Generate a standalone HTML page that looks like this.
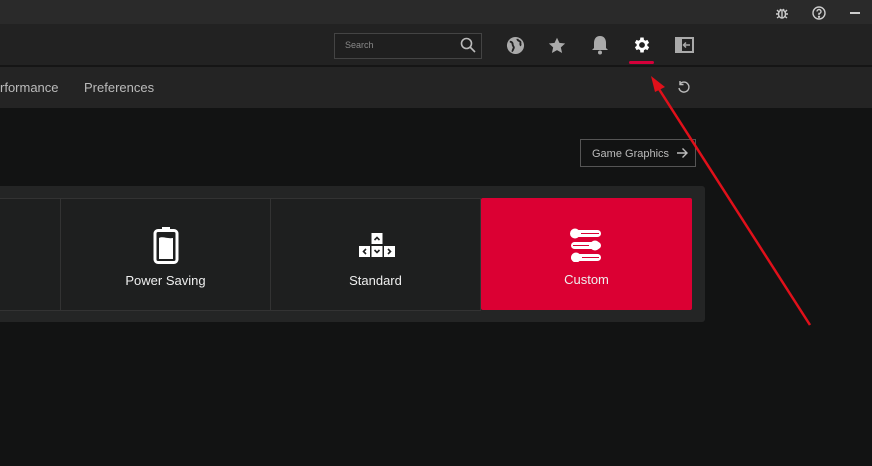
<!DOCTYPE html>
<html><head><style>
body{margin:0;width:872px;height:466px;background:#121313;font-family:"Liberation Sans",sans-serif;position:relative;overflow:hidden;color:#ddd}
.a{position:absolute}
.tile{position:absolute;top:198px;height:111px;background:#1e1f1f;border:1px solid #333}
.lbl{position:absolute;top:74px;width:100%;text-align:center;font-size:13px;color:#eee}
</style></head><body>
<div class="a" style="left:0;top:0;width:872px;height:24px;background:#2a2a2a"></div>
<div class="a" style="left:0;top:24px;width:872px;height:41px;background:#222"></div>
<div class="a" style="left:0;top:65px;width:872px;height:2px;background:#151515"></div>
<div class="a" style="left:0;top:67px;width:872px;height:41px;background:#242424"></div>
<svg class="a" style="left:775px;top:6px" width="14" height="14" viewBox="0 0 14 14" fill="none" stroke="#ccc" stroke-width="1.4"><ellipse cx="7" cy="8" rx="3.5" ry="4"/><path d="M1 8h2.5M10.5 8H13M2 4l2 2M12 4l-2 2M2 12l2-1.5M12 12l-2-1.5M5 3l1 1.5M9 3l-1 1.5M7 5v7"/></svg>
<svg class="a" style="left:812px;top:6px" width="14" height="14" viewBox="0 0 14 14" fill="none" stroke="#ccc" stroke-width="1.4"><circle cx="7" cy="7" r="6"/><path d="M5 5.5a2 2 0 1 1 2 2v1.5"/><circle cx="7" cy="10.8" r=".5" fill="#ccc"/></svg>
<div class="a" style="left:850px;top:12px;width:10px;height:2px;background:#ccc"></div>
<div class="a" style="left:334px;top:33px;width:146px;height:24px;border:1px solid #444;background:#1f1f1f"></div>
<div class="a" style="left:345px;top:40px;font-size:9px;color:#888">Search</div>
<svg class="a" style="left:460px;top:37px" width="16" height="16" viewBox="0 0 16 16" fill="none" stroke="#bbb" stroke-width="1.6"><circle cx="6.5" cy="6.5" r="5"/><path d="M10 10l5 5"/></svg>
<svg class="a" style="left:506px;top:36px" width="19" height="19" viewBox="0 0 20 20"><circle cx="10" cy="10" r="9" fill="#aaa"/><path d="M4 6c2 0 3 1 3 3s2 2 1 4-1 3-2 3M12 3c0 2 2 2 3 3s-1 3 1 4" stroke="#222" stroke-width="2" fill="none"/></svg>
<svg class="a" style="left:548px;top:37px" width="18" height="17" viewBox="0 0 24 23"><path d="M12 1l3.3 7 7.7.8-5.8 5.2 1.7 7.6L12 17.7 5.1 21.6l1.7-7.6L1 8.8 8.7 8z" fill="#aaa"/></svg>
<svg class="a" style="left:591px;top:35px" width="18" height="20" viewBox="0 0 18 20"><path d="M9 1c4 0 6 3 6 7v5l2 2H1l2-2V8c0-4 2-7 6-7z" fill="#aaa"/><circle cx="9" cy="17.5" r="2" fill="#aaa"/></svg>
<svg class="a" style="left:632px;top:35px" width="20" height="20" viewBox="0 0 24 24"><path fill="#fff" d="M19.4 13a7.5 7.5 0 0 0 0-2l2.1-1.6-2-3.5-2.5 1a7.5 7.5 0 0 0-1.7-1L15 3h-4l-.4 2.9a7.5 7.5 0 0 0-1.7 1l-2.5-1-2 3.5L6.6 11a7.5 7.5 0 0 0 0 2l-2.1 1.6 2 3.5 2.5-1a7.5 7.5 0 0 0 1.7 1L11 21h4l.4-2.9a7.5 7.5 0 0 0 1.7-1l2.5 1 2-3.5zM13 15.5a3.5 3.5 0 1 1 0-7 3.5 3.5 0 0 1 0 7z" transform="translate(-1 0)"/></svg>
<div class="a" style="left:629px;top:61px;width:25px;height:3px;background:#d4003a;border-radius:2px"></div>
<svg class="a" style="left:675px;top:37px" width="19" height="16" viewBox="0 0 19 16"><rect x="1" y="1" width="17" height="14" fill="none" stroke="#aaa" stroke-width="2"/><rect x="1" y="1" width="6" height="14" fill="#aaa"/><path d="M15 8H9M11 5.5L8.5 8 11 10.5" stroke="#aaa" stroke-width="1.5" fill="none"/></svg>
<div class="a" style="left:0;top:80px;font-size:13px;color:#bbb">rformance</div>
<div class="a" style="left:84px;top:80px;font-size:13px;color:#bbb">Preferences</div>
<svg class="a" style="left:677px;top:80px" width="14" height="14" viewBox="0 0 14 14" fill="none" stroke="#bbb" stroke-width="1.4"><path d="M3 4a5 5 0 1 1-1 4"/><path d="M3 1v3.5h3.5"/></svg>
<div class="a" style="left:580px;top:139px;width:116px;height:28px;border:1px solid #555;box-sizing:border-box"></div>
<div class="a" style="left:592px;top:148px;font-size:11px;color:#bbb">Game Graphics</div>
<svg class="a" style="left:676px;top:147px" width="12" height="12" viewBox="0 0 12 12" fill="none" stroke="#bbb" stroke-width="1.4"><path d="M1 6h10M6.5 1.5L11 6l-4.5 4.5"/></svg>
<div class="a" style="left:0;top:186px;width:705px;height:136px;background:#242525;border-radius:0 3px 3px 0"></div>
<div class="tile" style="left:-1px;width:60px"></div>
<div class="tile" style="left:60px;width:209px">
 <svg class="a" style="left:92px;top:27px" width="26" height="38" viewBox="0 0 26 38"><rect x="9" y="1" width="8" height="4" fill="#fff"/><rect x="2" y="4.5" width="22" height="32" rx="3" fill="none" stroke="#fff" stroke-width="3"/><path d="M6 12c4-2 8 1 14 0v21H6z" fill="#fff"/></svg>
 <div class="lbl">Power Saving</div></div>
<div class="tile" style="left:270px;width:209px">
 <svg class="a" style="left:86px;top:33px" width="40" height="27" viewBox="0 0 40 27"><rect x="14.5" y="1" width="11" height="11" fill="#fff"/><rect x="2" y="14" width="11" height="11" fill="#fff"/><rect x="14.5" y="14" width="11" height="11" fill="#fff"/><rect x="27" y="14" width="11" height="11" fill="#fff"/><g stroke="#1e1f1f" stroke-width="1.6" fill="none"><path d="M17.5 8l2.5-2.5 2.5 2.5M17.5 18l2.5 2.5 2.5-2.5M9 17l-2.5 2.5L9 22M31 17l2.5 2.5L31 22"/></g></svg>
 <div class="lbl">Standard</div></div>
<div class="a" style="left:481px;top:198px;width:211px;height:112px;background:#db0033;border-radius:2px">
 <svg class="a" style="left:88px;top:30px" width="36" height="34" viewBox="0 0 36 34"><g fill="#fff"><rect x="2" y="2" width="30" height="7" rx="3.5"/><rect x="2" y="14" width="30" height="7" rx="3.5"/><rect x="2" y="26" width="30" height="7" rx="3.5"/><circle cx="6" cy="5.5" r="5"/><circle cx="26" cy="17.5" r="5"/><circle cx="7" cy="29.5" r="5"/></g><g stroke="#db0033" stroke-width="1"><path d="M12 5.5h18M4 17.5h16M13 29.5h17"/></g></svg>
 <div class="lbl" style="top:74px">Custom</div></div>
<svg class="a" style="left:0;top:0" width="872" height="466"><line x1="810" y1="325" x2="657" y2="86" stroke="#e0101a" stroke-width="2.5"/><path d="M651 76l14 11-10 5z" fill="#e0101a"/></svg>
</body></html>
